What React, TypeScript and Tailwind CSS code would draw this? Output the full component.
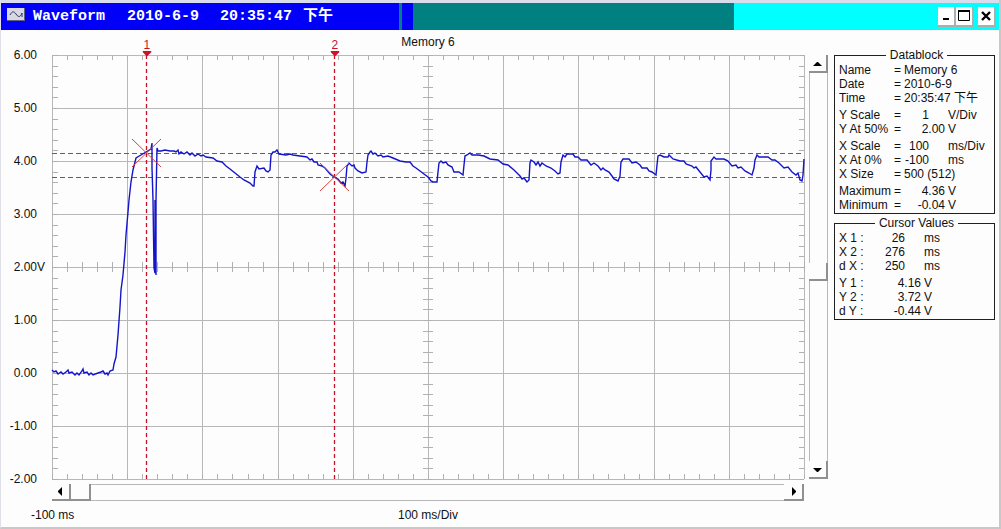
import clsx from "clsx";

type Row = { label: string; text?: string; value?: string; unit?: string };

const datablock: Row[][] = [
  [
    { label: "Name", text: "Memory 6" },
    { label: "Date", text: "2010-6-9" },
    { label: "Time", text: "20:35:47 下午" },
  ],
  [
    { label: "Y Scale", value: "1", unit: "V/Div" },
    { label: "Y At 50%", value: "2.00", unit: "V" },
  ],
  [
    { label: "X Scale", value: "100", unit: "ms/Div" },
    { label: "X At 0%", value: "-100", unit: "ms" },
    { label: "X Size", text: "500 (512)" },
  ],
  [
    { label: "Maximum", value: "4.36", unit: "V" },
    { label: "Minimum", value: "-0.04", unit: "V" },
  ],
];

const cursorValues: Row[][] = [
  [
    { label: "X 1 :", value: "26", unit: "ms" },
    { label: "X 2 :", value: "276", unit: "ms" },
    { label: "d X :", value: "250", unit: "ms" },
  ],
  [
    { label: "Y 1 :", value: "4.16", unit: "V" },
    { label: "Y 2 :", value: "3.72", unit: "V" },
    { label: "d Y :", value: "-0.44", unit: "V" },
  ],
];

const yLabels = ["6.00", "5.00", "4.00", "3.00", "2.00", "1.00", "0.00", "-1.00", "-2.00"];

const trace = `52,370 54,372 56,371 58,374 61,372 63,374 66,372 68,370 69,373 72,372 75,375
  77,373 79,375 82,371 83,369 84,373 87,372 89,375 91,373 93,375 98,373 101,372 103,371
  105,374 107,373 108,375 110,371 113,370 114,364 116,357 118,335 120,307 121,290 123,275
  125,252 126,235 128,212 129,200 131,182 133,170 135,162 136,158 141,155 146,152 151,149
  152,143 152,168 153,200 154,268 155,273 155,200 156,275 156,200 157,148 158,151 161,151
  165,150 170,151 174,151 176,152 178,150 179,154 181,152 184,154 187,152 190,155 192,153
  195,156 198,154 201,156 203,155 206,157 213,158 217,161 222,162 226,166 230,169 235,173
  240,177 244,180 250,183 253,186 254,186 255,172 257,166 259,169 264,168 266,171 268,172
  270,170 271,155 273,152 275,152 277,150 279,154 286,155 290,154 293,155 300,156 307,157
  310,160 312,159 314,162 317,162 318,165 322,166 325,168 330,174 334,177 338,179 341,183
  343,182 345,186 346,178 347,166 349,163 352,166 354,165 355,168 358,171 362,173 366,172
  367,162 368,155 370,152 371,151 373,154 375,153 378,156 381,155 383,157 388,156 393,158
  400,161 406,162 410,162 413,166 416,168 420,171 424,174 428,177 431,181 433,182 437,182
  438,172 439,163 441,161 443,163 446,162 448,165 452,167 454,172 459,172 463,175 464,165
  465,156 467,155 470,153 472,155 478,155 484,156 490,159 498,160 503,164 508,165 514,170
  520,176 522,179 524,178 527,182 529,180 530,163 531,160 534,162 536,165 538,162 540,166
  542,163 546,166 551,168 555,171 558,174 560,173 561,162 563,155 565,157 567,154 573,154
  575,157 578,157 581,160 587,160 591,165 594,163 598,166 601,170 603,168 605,170 609,172
  612,176 614,179 618,181 620,176 621,162 623,159 629,159 632,163 636,162 640,165 642,168
  647,168 649,171 652,172 656,175 657,165 658,156 660,155 664,157 668,157 669,155 673,159
  680,161 684,161 686,164 692,166 694,168 696,167 700,172 704,177 707,176 710,180 711,170
  711,161 714,157 716,159 724,159 728,161 732,166 736,165 738,168 741,167 745,171 749,173
  752,175 754,168 755,160 757,155 759,157 768,157 772,160 775,160 779,163 784,168 788,167
  792,172 796,175 798,173 800,180 802,181 803,175 804,159`;

const X0 = 52;
const Y0 = 55;
const W = 752;
const H = 424;

function range(n: number) {
  return Array.from({ length: n }, (_, i) => i);
}

function gridPath() {
  const v = range(11).map((i) => `M${Math.round(X0 + (i * W) / 10)} ${Y0}v${H}`);
  const h = range(9).map((i) => `M${X0} ${Y0 + (i * H) / 8}h${W}`);
  return [...v, ...h].join("");
}

function tickPath() {
  const v = range(51).map((i) => {
    const x = Math.round(X0 + (i * W) / 50);
    return `M${x} ${Y0}v5M${x} 262v10M${x} ${Y0 + H}v-5`;
  });
  const h = range(41).map((i) => {
    const y = Math.round(Y0 + (i * H) / 40);
    return `M${X0} ${y}h6M423 ${y}h10M${X0 + W} ${y}h-5`;
  });
  return [...v, ...h].join("");
}

// horizontal cursor line, drawn as filled dashes 5 on / 3 off
function dashes(y: number) {
  return range(W / 8)
    .map((i) => `M${X0 + i * 8} ${y}h5v1h-5z`)
    .join("");
}

function Plot() {
  return (
    <svg
      viewBox={`${X0} ${Y0} ${W} ${H}`}
      preserveAspectRatio="none"
      className="block h-[424px] w-full overflow-visible"
      fill="none"
      role="img"
      aria-label="Waveform trace"
    >
      <g shapeRendering="crispEdges">
        <path d={gridPath()} stroke="#b8b8b8" />
        <path d={tickPath()} stroke="#b0b0b0" />
      </g>
      <path d={dashes(153) + dashes(177)} fill="#e02838" />
      <path d="M146.500 55v424" stroke="#c81028" strokeWidth="1.300" strokeDasharray="4 3" />
      <path d="M334.500 55v424" stroke="#c81028" strokeWidth="1.300" strokeDasharray="4 3" />
      <polyline points={trace} stroke="#1414c8" strokeWidth="1.4" />
      <path d="M132 139l29 28M161 139l-29 28M320 191l29 -28M320 163l29 28" stroke="#d04040" />
    </svg>
  );
}

function CursorMark({ label, className }: { label: string; className: string }) {
  return (
    <span
      className={clsx(
        "absolute -top-4 flex -translate-x-1/2 flex-col items-center text-xs leading-3 text-[#c81028]",
        className,
      )}
    >
      {label}
      <svg viewBox="0 0 9 5" className="h-[5px] w-[9px]" aria-hidden>
        <path d="M0 0h9v1L5 5H4L0 1z" fill="#d01028" />
      </svg>
    </span>
  );
}

function Arrow({ d }: { d: string }) {
  return (
    <svg viewBox="0 0 9 9" className="size-[9px]" aria-hidden>
      <path d={d} />
    </svg>
  );
}

const knob = "flex shrink-0 items-center justify-center border-[#909090] bg-[#fdfdfd]";

function VerticalScroll() {
  return (
    <div className="flex flex-col">
      <button className={clsx(knob, "h-[18px] border-r-2 border-b-2")} aria-label="Scroll up">
        <Arrow d="M0 7h9L5 3H4z" />
      </button>
      <div className="flex-[190] border-x border-[#b8b8b8]" />
      <button className={clsx(knob, "h-[18px] border-r-2 border-b-2")} aria-label="Vertical position" />
      <div className="flex-[180] border-x border-[#b8b8b8]" />
      <button className={clsx(knob, "h-[18px] border-r-2 border-b-2")} aria-label="Scroll down">
        <Arrow d="M0 3h9L5 7H4z" />
      </button>
    </div>
  );
}

function HorizontalScroll() {
  return (
    <div className="flex h-[17px]">
      <button className={clsx(knob, "w-[19px] border-r-2 border-b-2")} aria-label="Scroll left">
        <Arrow d="M6 0v9L2 5V4z" />
      </button>
      <button className={clsx(knob, "w-5 border-r-2 border-b-2")} aria-label="Horizontal position" />
      <div className="flex-1 border-y border-[#b8b8b8]" />
      <button className={clsx(knob, "w-5 border-r-2 border-b-2")} aria-label="Scroll right">
        <Arrow d="M3 0v9l4-4V4z" />
      </button>
    </div>
  );
}

function TitleBar() {
  const button =
    "flex h-5 w-[18px] items-center justify-center border-r-2 border-b-2 border-[#a8b0b0] bg-white";
  return (
    <header className="flex h-[27px]">
      <div className="flex w-[398px] items-center bg-[#0000f8] pl-[6px] text-white">
        <svg viewBox="0 0 18 13" className="mb-1 h-[13px] w-[18px]" aria-hidden>
          <path d="M0 0h18v13H0z" fill="#606080" />
          <path d="M0 0h17v12H0z" fill="#d8d8e4" />
          <path d="M3 7c2-4 4-4 6-1s4 4 6-1v4" fill="none" stroke="#303060" />
        </svg>
        <h1 className="flex pt-px pl-2 font-['Liberation_Mono','Noto_Sans_CJK_SC',monospace] text-[15px] leading-5 font-bold whitespace-nowrap">
          <span className="w-[94px]">Waveform</span>
          <span className="w-[93px]">2010-6-9</span>
          <span className="w-[83px]">20:35:47</span>
          <span>下午</span>
        </h1>
      </div>
      <div className="w-[3px] bg-[#008080]" />
      <div className="w-[11px] bg-[#0000f8]" />
      <div className="flex-1 bg-[#008080]" />
      <div className="flex w-[265px] items-center justify-end bg-[#00ffff] pr-[3px]">
        <button className={button} aria-label="Minimize">
          <svg viewBox="0 0 10 10" className="size-[10px]" aria-hidden>
            <path d="M2 7h6v2H2z" />
          </svg>
        </button>
        <button className={button} aria-label="Maximize">
          <svg viewBox="0 0 12 12" className="size-3 shrink-0" aria-hidden>
            <path d="M.5 1v9.500h11V1z" fill="none" stroke="#000" />
            <path d="M0 0h12v2H0z" />
          </svg>
        </button>
        <button className={clsx(button, "ml-1")} aria-label="Close">
          <svg viewBox="0 0 10 10" className="size-[10px]" aria-hidden>
            <path d="M1 1l8 8M9 1L1 9" stroke="#000" strokeWidth="2.400" />
          </svg>
        </button>
      </div>
    </header>
  );
}

function Panel({ title, groups, cursor }: { title: string; groups: Row[][]; cursor?: boolean }) {
  return (
    <fieldset className="min-w-0 border border-[#202020] pt-px pb-px pl-1">
      <legend className="mx-auto px-1 leading-[14px]">{title}</legend>
      <table className="w-full table-fixed border-collapse leading-[14px] whitespace-nowrap">
        <colgroup>
          <col className={cursor ? "w-[29px]" : "w-[55px]"} />
          {!cursor && <col className="w-[10px]" />}
          <col className={cursor ? "w-[53px]" : "w-[41px]"} />
          <col />
        </colgroup>
        {groups.map((rows, g) => (
          <tbody key={g}>
            {rows.map((row, i) => {
              const top = g > 0 && i === 0 && "pt-[3px]";
              return (
                <tr key={row.label}>
                  <th scope="row" className={clsx("text-left font-normal", top)}>
                    {row.label}
                  </th>
                  {!cursor && <td className={clsx(top)}>=</td>}
                  {row.text ? (
                    <td colSpan={2} className={clsx(top)}>
                      {row.text}
                    </td>
                  ) : (
                    <>
                      <td className={clsx("text-right", !row.value?.includes(".") && "pr-4", top)}>
                        {row.value}
                      </td>
                      <td className={clsx("pl-[3px]", top)}>{row.unit}</td>
                    </>
                  )}
                </tr>
              );
            })}
          </tbody>
        ))}
      </table>
    </fieldset>
  );
}

export default function App() {
  return (
    <div className="border-r-2 border-b-2 border-l border-[#c8c8c8] border-l-[#e0e0e8] bg-[#fdfdfd] font-['Liberation_Sans','Noto_Sans_CJK_SC',sans-serif] text-xs text-[#101010]">
      <div className="h-[3px] bg-[#d8dcec]" />
      <TitleBar />
      <main className="flex items-start pt-[5px] pr-1 pb-[5px]">
        <section className="grid flex-1 grid-cols-[51px_1fr_24px] leading-[14px]">
          <h2 className="col-start-2 row-start-1 pb-[6px] text-center">Memory 6</h2>

          <div className="col-start-1 row-start-2 -my-[7px] flex flex-col justify-between">
            {yLabels.map((label) => (
              <div key={label} className="flex">
                <span className="w-9 text-right">{label}</span>
                {label === "2.00" && <span>V</span>}
              </div>
            ))}
          </div>
          <div className="relative col-start-2 row-start-2">
            <Plot />
            <CursorMark label="1" className="left-[12.6%]" />
            <CursorMark label="2" className="left-[37.6%]" />
          </div>
          <div className="col-start-3 row-start-2 grid pl-[5px]">
            <VerticalScroll />
          </div>

          <div className="col-start-2 row-start-3 pt-[5px]">
            <HorizontalScroll />
          </div>

          <span className="col-start-1 row-start-4 pt-[7px] pl-[30px] whitespace-nowrap">
            -100 ms
          </span>
          <span className="col-start-2 row-start-4 pt-[7px] text-center">100 ms/Div</span>
        </section>

        <aside className="ml-[6px] flex w-[161px] flex-col gap-[2px] pt-[13px]">
          <Panel title="Datablock" groups={datablock} />
          <Panel title="Cursor Values" groups={cursorValues} cursor />
        </aside>
      </main>
    </div>
  );
}
